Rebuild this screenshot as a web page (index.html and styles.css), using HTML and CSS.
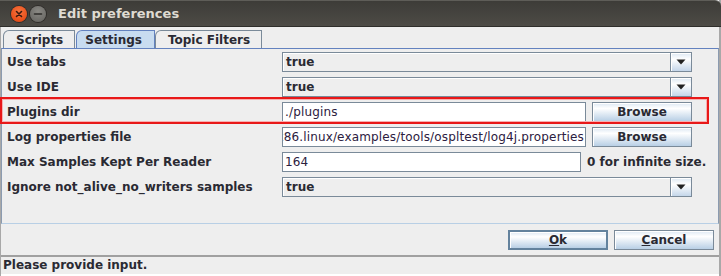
FILE: index.html
```html
<!DOCTYPE html>
<html>
<head>
<meta charset="utf-8">
<link rel="stylesheet" href="styles.css">
</head>
<body>
<div class="window">
  <div class="titlebar">
    <div class="wbtn close"><svg width="16" height="16" viewBox="0 0 16 16"><path d="M5.5 5.5 L10.5 10.5 M10.5 5.5 L5.5 10.5" stroke="#3a1a10" stroke-width="1.6" stroke-linecap="round"/></svg></div>
    <div class="wbtn min"><svg width="16" height="16" viewBox="0 0 16 16"><path d="M4.5 8 H11.5" stroke="#2e2d2a" stroke-width="1.6" stroke-linecap="round"/></svg></div>
    <div class="title">Edit preferences</div>
  </div>
  <div class="tabs">
    <div class="tab">Scripts</div>
    <div class="tab selected">Settings</div>
    <div class="tab">Topic Filters</div>
  </div>
  <div class="panel">
    <div class="row">
      <div class="label">Use tabs</div>
      <div class="ctrl">
        <div class="combo"><span class="cval">true</span><span class="carrow"><svg width="10" height="6" viewBox="0 0 10 6"><path d="M0.5 0.5 H9.5 L5 5.5 Z" fill="#222"/></svg></span></div>
      </div>
    </div>
    <div class="row">
      <div class="label">Use IDE</div>
      <div class="ctrl">
        <div class="combo"><span class="cval">true</span><span class="carrow"><svg width="10" height="6" viewBox="0 0 10 6"><path d="M0.5 0.5 H9.5 L5 5.5 Z" fill="#222"/></svg></span></div>
      </div>
    </div>
    <div class="row">
      <div class="label">Plugins dir</div>
      <div class="ctrl">
        <div class="field wide">./plugins</div>
        <div class="button browse">Browse</div>
      </div>
    </div>
    <div class="row">
      <div class="label">Log properties file</div>
      <div class="ctrl">
        <div class="field wide scrolled"><span>x86.linux/examples/tools/ospltest/log4j.properties</span></div>
        <div class="button browse">Browse</div>
      </div>
    </div>
    <div class="row">
      <div class="label">Max Samples Kept Per Reader</div>
      <div class="ctrl">
        <div class="field narrow">164</div>
        <div class="hint">0 for infinite size.</div>
      </div>
    </div>
    <div class="row">
      <div class="label">Ignore not_alive_no_writers samples</div>
      <div class="ctrl">
        <div class="combo"><span class="cval">true</span><span class="carrow"><svg width="10" height="6" viewBox="0 0 10 6"><path d="M0.5 0.5 H9.5 L5 5.5 Z" fill="#222"/></svg></span></div>
      </div>
    </div>
    <div class="highlight"></div>
  </div>
  <div class="actions">
    <div class="button action default"><span class="u">O</span>k</div>
    <div class="button action"><span class="u">C</span>ancel</div>
  </div>
  <div class="status">Please provide input.</div>
</div>
</body>
</html>
```
FILE: styles.css
```css
html, body {
  margin: 0;
  padding: 0;
  background: #eeeeee;
}
body {
  width: 721px;
  height: 276px;
  overflow: hidden;
  font-family: "DejaVu Sans", sans-serif;
  font-size: 12px;
  color: #2a2a33;
}
.window {
  width: 721px;
  height: 276px;
  display: flex;
  flex-direction: column;
  background: #eeeeee;
  box-sizing: border-box;
  border-right: 2px solid #a8a8a8;
  border-left: 1px solid #a8a8a8;
}
.titlebar {
  height: 27px;
  flex: none;
  display: flex;
  align-items: center;
  box-sizing: border-box;
  margin: 0 -2px 0 -1px;
  padding-left: 11px;
  background: linear-gradient(#3d3c38, #4d4b46);
  border-top: 1px solid #5e5d58;
  border-bottom: 1px solid #2f2e2b;
  border-top-right-radius: 6px;
}
.wbtn {
  width: 16px;
  height: 16px;
  border-radius: 50%;
  margin-right: 3px;
  display: flex;
}
.close {
  background: radial-gradient(circle at 50% 35%, #f7743f, #e84f1a 70%, #c03f14);
  box-shadow: 0 0 0 1px #2f2d2a;
}
.min {
  background: radial-gradient(circle at 50% 35%, #8a8984, #6e6d69 70%, #5a5955);
  box-shadow: 0 0 0 1px #2f2d2a;
}
.title {
  margin-left: 9px;
  font-weight: bold;
  font-size: 13px;
  color: #dfdbd2;
}
.tabs {
  height: 21px;
  flex: none;
  display: flex;
  align-items: flex-end;
  padding-left: 2px;
}
.tab {
  height: 18px;
  box-sizing: border-box;
  border: 1px solid #7a8a99;
  border-bottom: none;
  border-top-left-radius: 6px;
  font-weight: bold;
  padding: 1px 11px 0 12px;
  line-height: 16px;
  background: #eeeeee;
  margin-right: 1px;
}
.tab.selected {
  background: #c8dcf0;
  border-color: #6382bf;
  padding-left: 8px;
  padding-right: 12px;
  height: 18px;
  margin-right: 0;
}
.panel {
  position: relative;
  flex: none;
  height: 176px;
  box-sizing: border-box;
  border: 1px solid #8b9bb0;
  border-top: 1px solid #6382bf;
  border-bottom: 1px solid #b8cfe5;
  margin-right: 0;
  padding: 3px 0 0 5px;
  display: flex;
  flex-direction: column;
  gap: 5px;
}
.row {
  height: 20px;
  display: flex;
  align-items: center;
}
.label {
  width: 275px;
  flex: none;
  font-weight: bold;
}
.ctrl {
  display: flex;
  align-items: center;
  gap: 6px;
  height: 20px;
}
.combo {
  width: 410px;
  height: 20px;
  box-sizing: border-box;
  border: 1px solid #7a8a99;
  background: #eeeeee;
  display: flex;
  box-shadow: inset 1px 1px 0 #ffffff;
}
.cval {
  flex: 1;
  font-weight: bold;
  padding-left: 3px;
  line-height: 18px;
}
.carrow {
  width: 20px;
  border-left: 1px solid #7a8a99;
  background: linear-gradient(#dde8f3, #ffffff 35%, #c4d6ea);
  display: flex;
  align-items: center;
  justify-content: center;
  box-shadow: inset 1px 1px 0 #ffffff;
}
.field {
  height: 20px;
  box-sizing: border-box;
  border: 1px solid #7a8a99;
  background: #ffffff;
  padding-left: 2px;
  line-height: 18px;
  white-space: nowrap;
  overflow: hidden;
  color: #2c2040;
  letter-spacing: 0.15px;
}
.field.wide { width: 304px; }
.field.narrow { width: 299px; }
.field.scrolled {
  display: flex;
  justify-content: flex-end;
  padding: 0 1px 0 0;
}
.field.scrolled span { flex: none; }
.hint {
  font-weight: bold;
}
.button {
  height: 20px;
  box-sizing: border-box;
  border: 1px solid #7a8a99;
  background: linear-gradient(#dde8f3, #ffffff 30%, #b8cfe5);
  box-shadow: inset 1px 1px 0 #ffffff;
  font-weight: bold;
  text-align: center;
  line-height: 18px;
}
.browse { width: 100px; }
.highlight {
  position: absolute;
  left: -2px;
  top: 48px;
  width: 709px;
  height: 27px;
  box-sizing: border-box;
  border: 2px solid #e81818;
  box-shadow: inset 0 0 0 1px #f6b0b0;
}
.actions {
  flex: none;
  height: 31px;
  display: flex;
  justify-content: flex-end;
  align-items: flex-start;
  gap: 6px;
  padding: 6px 5px 0 0;
  box-sizing: border-box;
}
.action { width: 100px; }
.action.default {
  border: 2px solid #63829d;
  line-height: 16px;
}
.u { text-decoration: underline; }
.status {
  flex: 1;
  border-top: 2px solid #a0a0a0;
  border-bottom: 2px solid #ffffff;
  font-weight: bold;
  padding-left: 2px;
  line-height: 16px;
}
```
